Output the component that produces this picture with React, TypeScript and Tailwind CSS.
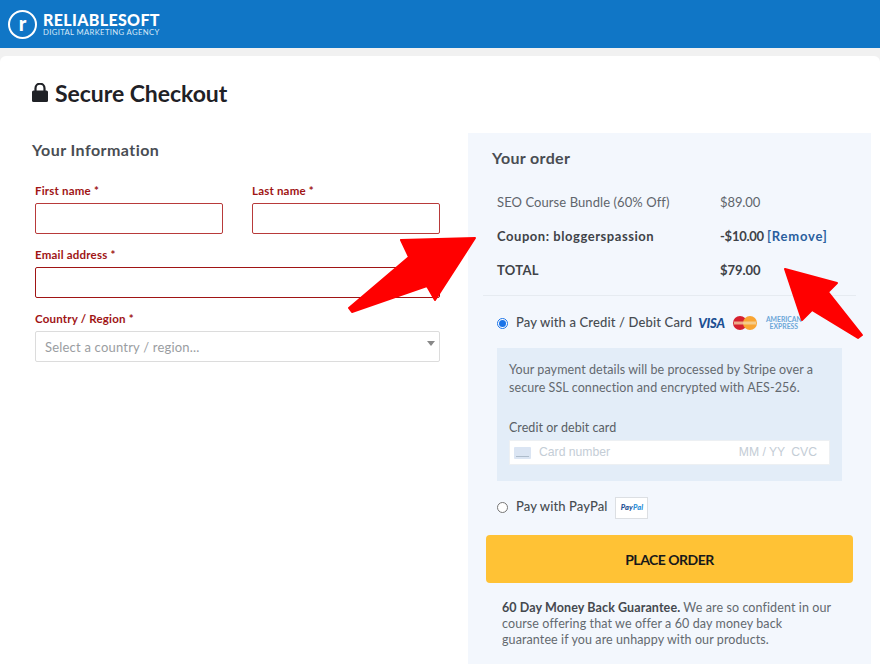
import React from "react";

const font = { fontFamily: '"Lato", "Liberation Sans", sans-serif' };

function Field({ label, dark, className = "" }: { label: string; dark?: boolean; className?: string }) {
  return (
    <div className={className}>
      <div className="text-[11.5px] leading-[14px] font-bold text-[#a01414] tracking-[0.2px]">{label} *</div>
      <div className={`mt-[5px] h-[31px] rounded-[2px] border bg-white ${dark ? "border-[#a01414]" : "border-[#b83a3a]"}`} />
    </div>
  );
}

function Row({ left, right, leftClass, rightClass, children }: { left: string; right: string; leftClass: string; rightClass: string; children?: React.ReactNode }) {
  return (
    <div className="flex h-[34px] items-center pl-[29px] text-[13px]">
      <div className={`w-[223px] shrink-0 ${leftClass}`}>{left}</div>
      <div className="whitespace-nowrap">
        <span className={rightClass}>{right}</span>
        {children}
      </div>
    </div>
  );
}

function Radio({ checked }: { checked?: boolean }) {
  return (
    <span className={`flex h-[11px] w-[11px] shrink-0 items-center justify-center rounded-full border bg-white ${checked ? "border-[#1a73e8]" : "border-[#767676]"}`}>
      {checked && <span className="h-[7px] w-[7px] rounded-full bg-[#1a73e8]" />}
    </span>
  );
}

export default function App() {
  return (
    <div className="relative h-[664px] w-[880px] overflow-hidden bg-[#f1f1f1]" style={font}>
      <header className="flex h-[48px] items-center bg-[#1076c6] pl-[8px] text-white">
        <div className="flex h-[29px] w-[29px] items-center justify-center rounded-full border-2 border-white text-[20px] font-black leading-none pb-[2px]">r</div>
        <div className="ml-[6px]">
          <div className="text-[16px] font-black leading-[14px] tracking-[0.35px]">RELIABLESOFT</div>
          <div className="mt-[1px] text-[7.7px] leading-[8px] tracking-[0.35px] text-[#d6e8f7]">DIGITAL MARKETING AGENCY</div>
        </div>
      </header>

      <main className="mt-[8px] h-[608px] rounded-t-[6px] bg-white pl-[32px]">
        <h1 className="flex h-[77px] items-center pb-[3px] text-[23px] font-bold text-[#1f2126]">
          <svg width="16" height="19" viewBox="0 0 16 19" className="mr-[7px] -mt-[1px]">
            <path d="M3.5 8V5.2a4.5 4.5 0 0 1 9 0V8" fill="none" stroke="#1f2126" strokeWidth="2.2" />
            <rect x="0" y="7.5" width="16" height="11.5" rx="1.5" fill="#1f2126" />
          </svg>
          <span className="tracking-[-0.05px]">Secure Checkout</span>
        </h1>

        <div className="flex">
          <section className="w-[436px] shrink-0">
            <h2 className="h-[36px] text-[16px] font-bold leading-[34px] tracking-[0.45px] text-[#494d53]">Your Information</h2>
            <div className="pl-[3px] pr-[28px] pt-[15px]">
              <div className="grid grid-cols-2 gap-x-[29px]">
                <Field label="First name" />
                <Field label="Last name" />
              </div>
              <Field label="Email address" dark className="mt-[14px]" />
              <div className="mt-[14px]">
                <div className="text-[11.5px] leading-[14px] font-bold text-[#a01414] tracking-[0.2px]">Country / Region *</div>
                <div className="relative mt-[5px] flex h-[31px] items-center rounded-[2px] border border-[#dcdcdc] bg-white pl-[9px] pt-[2px] text-[13px] tracking-[0.2px] text-[#9a9da1]">
                  Select a country / region...
                  <span className="absolute right-[4px] top-[9px] h-0 w-0 border-x-[4px] border-t-[5px] border-x-transparent border-t-[#888]" />
                </div>
              </div>
            </div>
          </section>

          <aside className="h-[531px] w-[403px] shrink-0 bg-[#f3f7fd] pt-[15px]">
            <h2 className="ml-[24px] h-[20px] text-[16px] font-bold leading-[20px] tracking-[0.35px] text-[#494d53]">Your order</h2>
            <div className="mt-[18px]">
              <Row left="SEO Course Bundle (60% Off)" right="$89.00" leftClass="text-[#5f656c] tracking-[0.08px]" rightClass="text-[#5f656c] tracking-[-0.1px]" />
              <Row left="Coupon: bloggerspassion" right="-$10.00" leftClass="font-bold text-[#3f4348] tracking-[0.55px]" rightClass="font-bold text-[#3f4348] tracking-[-0.25px]">
                <span className="ml-[3px] font-bold text-[#2a5f9e] tracking-[0.8px]">[Remove]</span>
              </Row>
              <Row left="TOTAL" right="$79.00" leftClass="font-bold text-[#3f4348] tracking-[0.3px]" rightClass="font-bold text-[#3f4348] tracking-[-0.05px]" />
            </div>
            <div className="mx-[15px] mt-[7px] h-px bg-[#e6ebf1]" />

            <div className="ml-[29px] mt-[20px] flex h-[14px] items-center text-[13px] font-medium tracking-[0.15px] text-[#474c52]">
              <Radio checked />
              <span className="ml-[8px]">Pay with a Credit / Debit Card</span>
              <span className="ml-[6px] text-[13px] font-black italic leading-none tracking-[-0.2px] text-[#1c4f93]">VISA</span>
              <svg width="24" height="14" viewBox="0 0 24 14" className="ml-[8px]">
                <circle cx="7" cy="7" r="7" fill="#d6212f" />
                <circle cx="17" cy="7" r="7" fill="#f9a533" />
                <rect x="1" y="5.5" width="22" height="3" fill="#f4d9a8" opacity="0.75" />
              </svg>
              <span className="ml-[8px] w-[38px] whitespace-nowrap text-center text-[6.8px] font-bold leading-[7px] tracking-[0px] text-[#6aa6d8]">
                AMERICAN
                <br />
                EXPRESS
              </span>
            </div>

            <div className="ml-[29px] mt-[18px] h-[133px] w-[345px] bg-[#e3edf8] px-[12px] pt-[13px] text-[12.5px] text-[#63696f]">
              <p className="leading-[18px] tracking-[0.08px]">
                Your payment details will be processed by Stripe over a secure SSL connection and encrypted with AES-256.
              </p>
              <div className="mt-[23px] leading-[16px] tracking-[0.05px] text-[#595f65]">Credit or debit card</div>
              <div className="mt-[4px] flex h-[25px] items-center border border-[#edf0f3] bg-white pl-[4px] pr-[12px] text-[12.2px] text-[#c4cdd6]" style={{ fontFamily: '"Liberation Sans", sans-serif' }}>
                <span className="relative h-[12px] w-[17px] rounded-[1px] bg-[#dbe5f3]">
                  <span className="absolute bottom-[2px] left-[2px] h-[1px] w-[13px] bg-[#aebccb]" />
                </span>
                <span className="ml-[8px]">Card number</span>
                <span className="ml-auto">MM / YY</span>
                <span className="ml-[6px]">CVC</span>
              </div>
            </div>

            <div className="ml-[29px] mt-[14px] flex h-[24px] items-center text-[13px] font-medium tracking-[0.1px] text-[#474c52]">
              <Radio />
              <span className="ml-[8px]">Pay with PayPal</span>
              <span className="ml-[8px] mt-[2px] flex h-[22px] w-[33px] items-center justify-center border border-[#dcdfe3] bg-white text-[7.5px] font-black italic text-[#1c4f93]">
                Pay<span className="text-[#2a8fd8]">Pal</span>
              </span>
            </div>

            <button className="ml-[18px] mt-[16px] flex h-[48px] w-[367px] items-center justify-center rounded-[4px] bg-[#ffc235] text-[14px] font-bold tracking-[-0.5px] text-[#17181a]">
              PLACE ORDER
            </button>

            <p className="ml-[34px] mt-[17px] w-[335px] text-[12.5px] leading-[16px] tracking-[0.1px] text-[#63696f]">
              <b className="text-[#45494f]">60 Day Money Back Guarantee.</b> We are so confident in our course offering that we offer a 60 day money back guarantee if you are unhappy with our products.
            </p>
          </aside>
        </div>
      </main>

      <svg width="880" height="664" viewBox="0 0 880 664" className="pointer-events-none absolute left-0 top-0">
        <path d="M401 240 L475 238 L435 300 L427 286 L352 312 L349 308 L409 257 Z" fill="#ff0000" stroke="#ff0000" strokeWidth="2" strokeLinejoin="round" />
        <path d="M785 269 L837 283 L828 292 L862 335 L858 338 L812 310 L802 320 Z" fill="#ff0000" stroke="#ff0000" strokeWidth="2" strokeLinejoin="round" />
      </svg>
    </div>
  );
}
